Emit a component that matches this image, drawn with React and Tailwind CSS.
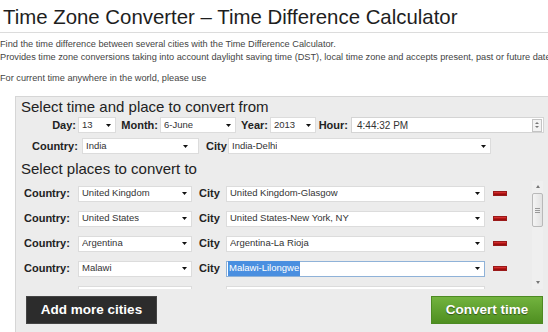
import React from "react";

function Arrow() {
  return (
    <svg width="5" height="3" viewBox="0 0 5 3" className="shrink-0">
      <polygon points="0,0 5,0 2.5,3" fill="#111" />
    </svg>
  );
}

function Sel({ className, children, arrowClass = "pr-[4px]" }) {
  return (
    <div
      className={`flex h-full items-center justify-between bg-white border border-[#dcdcdc] pl-[3px] ${arrowClass} text-[9.5px] text-[#333] ${className}`}
    >
      <span className="truncate">{children}</span>
      <Arrow />
    </div>
  );
}

function RedBar() {
  return (
    <div className="ml-[8px] h-[5px] w-[14px] shrink-0 bg-linear-to-b from-[#dc3b3b] via-[#b51515] to-[#8a0c0c] border border-[#9a1a1a]" />
  );
}

function Row({ country, city, selected, blank }) {
  return (
    <div className="flex h-[25px] shrink-0 items-center">
      <div className="w-[54px] text-[11px] font-bold text-[#222]">{blank ? "" : "Country:"}</div>
      <div className="h-[16px]">
        <Sel className="w-[114px]">{country}</Sel>
      </div>
      <div className="w-[34px] pl-[7px] text-[11px] font-bold text-[#222]">{blank ? "" : "City"}</div>
      <div className="h-[16px]">
        {selected ? (
          <div className="flex h-full w-[259px] items-center justify-between bg-white border border-[#8fb2d8] pl-[1px] pr-[4px] text-[9.5px]">
            <span className="bg-[#4a8fe0] px-[1px] text-white">{city}</span>
            <Arrow />
          </div>
        ) : (
          <Sel className="w-[259px]">{city}</Sel>
        )}
      </div>
      <RedBar />
    </div>
  );
}

function Scrollbar() {
  return (
    <div className="mr-[5px] flex w-[11px] shrink-0 flex-col items-center bg-[#efefef]">
      <div className="mt-[4px] h-0 w-0 border-x-[2.5px] border-b-[3px] border-x-transparent border-b-[#777]" />
      <div className="mt-[5px] flex h-[34px] w-[11px] flex-col items-center justify-center gap-[1px] rounded-[2px] border border-[#b9b9b9] bg-linear-to-r from-[#f4f4f4] to-[#e2e2e2]">
        <div className="h-px w-[5px] bg-[#999]" />
        <div className="h-px w-[5px] bg-[#999]" />
        <div className="h-px w-[5px] bg-[#999]" />
      </div>
      <div className="flex-1" />
      <div className="mb-[5px] h-0 w-0 border-x-[2.5px] border-t-[3px] border-x-transparent border-t-[#777]" />
    </div>
  );
}

export default function App() {
  const rows = [
    { country: "United Kingdom", city: "United Kingdom-Glasgow" },
    { country: "United States", city: "United States-New York, NY" },
    { country: "Argentina", city: "Argentina-La Rioja" },
    { country: "Malawi", city: "Malawi-Lilongwe", selected: true },
    { country: "", city: "", blank: true },
  ];
  return (
    <div className="flex h-[332px] w-[548px] flex-col overflow-hidden bg-white font-['Liberation_Sans',Arial,sans-serif] text-[#333]">
      <h1 className="whitespace-nowrap pl-[3px] pt-[4px] text-[20.4px] leading-[26px] text-[#1e1e1e]">
        Time Zone Converter – Time Difference Calculator
      </h1>
      <div className="mt-[2px] h-px shrink-0 bg-[#dcdcdc]" />
      <div className="mt-[5px] whitespace-nowrap text-[9.2px] leading-[13px] text-[#444]">
        <p>Find the time difference between several cities with the Time Difference Calculator.</p>
        <p>
          Provides time zone conversions taking into account daylight saving time (DST), local time zone and accepts
          present, past or future dates.
        </p>
        <p className="mt-[8px]">For current time anywhere in the world, please use</p>
      </div>

      <div className="ml-[15px] mt-[11px] flex flex-1 flex-col border-l border-t border-[#d6d6d6] bg-[#ececec]">
        <h2 className="mt-[1px] whitespace-nowrap pl-[5px] text-[15px] leading-[18px] text-[#222]">
          Select time and place to convert from
        </h2>
        <div className="mt-[1px] flex h-[16px] shrink-0 items-center text-[11px] font-bold text-[#222]">
          <div className="w-[36px]" />
          <div className="w-[26px] pr-[2px] text-right">Day:</div>
          <Sel className="w-[38px] font-normal">13</Sel>
          <div className="w-[44px] pr-[2px] text-right">Month:</div>
          <Sel className="w-[76px] font-normal">6-June</Sel>
          <div className="w-[34px] pr-[2px] text-right">Year:</div>
          <Sel className="w-[46px] font-normal">2013</Sel>
          <div className="w-[35px] pr-[3px] text-right">Hour:</div>
          <div className="flex h-full w-[193px] items-center justify-between border border-[#d4d4d4] bg-white pl-[5px] pr-[1px] text-[10px] font-normal text-[#333]">
            <span>4:44:32 PM</span>
            <div className="flex h-[13px] w-[10px] flex-col items-center justify-center gap-[2px] border border-[#c4c4c4] bg-[#f3f3f3]">
              <div className="h-0 w-0 border-x-[2px] border-b-[2px] border-x-transparent border-b-[#777]" />
              <div className="h-0 w-0 border-x-[2px] border-t-[2px] border-x-transparent border-t-[#777]" />
            </div>
          </div>
        </div>
        <div className="mt-[5px] flex h-[16px] shrink-0 items-center text-[11px] font-bold text-[#222]">
          <div className="w-[16px]" />
          <div className="w-[50px]">Country:</div>
          <Sel className="w-[117px] font-normal" arrowClass="pr-[10px]">India</Sel>
          <div className="w-[29px] pl-[7px]">City</div>
          <Sel className="w-[263px] font-normal">India-Delhi</Sel>
        </div>
        <h2 className="mt-[6px] whitespace-nowrap pl-[5px] text-[15px] leading-[18px] text-[#222]">
          Select places to convert to
        </h2>
        <div className="mt-[3px] flex h-[108px] shrink-0">
          <div className="flex flex-1 flex-col overflow-hidden pl-[8px]">
            {rows.map((r, i) => (
              <Row key={i} {...r} />
            ))}
          </div>
          <Scrollbar />
        </div>
        <div className="mt-[7px] flex h-[28px] shrink-0 justify-between pl-[10px] pr-[5px]">
          <button className="flex w-[131px] items-center justify-center border border-[#444] bg-[#2c2c2c] text-[13.5px] font-bold text-white">
            Add more cities
          </button>
          <button className="flex w-[112px] items-center justify-center border border-[#4c8a22] bg-linear-to-b from-[#72b33e] to-[#4f8f20] text-[13.5px] font-bold text-white [text-shadow:0_1px_1px_rgba(0,0,0,0.45)]">
            Convert time
          </button>
        </div>
      </div>
    </div>
  );
}
